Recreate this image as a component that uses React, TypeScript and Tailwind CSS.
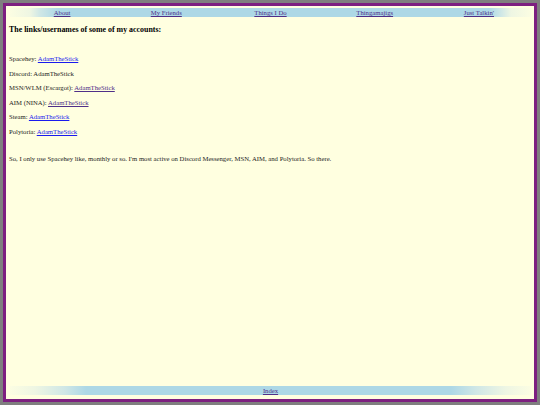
export default function App() {
  const navItems = ['About', 'My Friends', 'Things I Do', 'Thingamajigs', "Just Talkin'"];
  const accounts: { label: string; user: string; link?: 'new' | 'visited' }[] = [
    { label: 'Spacehey:', user: 'AdamTheStick', link: 'new' },
    { label: 'Discord:', user: 'AdamTheStick' },
    { label: 'MSN/WLM (Escargot):', user: 'AdamTheStick', link: 'visited' },
    { label: 'AIM (NINA):', user: 'AdamTheStick', link: 'visited' },
    { label: 'Steam:', user: 'AdamTheStick', link: 'new' },
    { label: 'Polytoria:', user: 'AdamTheStick', link: 'new' },
  ];

  return (
    <div className="h-[405px] w-[540px] bg-[#7f7f7f] p-[3px] font-['Liberation_Serif',serif] text-[#1c1c1c]">
      <div className="flex h-full flex-col border-[3px] border-[#7d1f80] bg-[#ffffe0] px-[3px] pb-[4px] pt-[2px]">
        {/* top nav */}
        <div className="ml-[1px] grid h-[9px] grid-cols-5 bg-[linear-gradient(to_right,#fbfde2,#eef6e3_20px,#cfe7e6_30px,#add8e6_48px,#add8e6_calc(100%-42px),#cfe7e6_calc(100%-30px),#eef6e3_calc(100%-20px),#fbfde2)]">
          {navItems.map((n) => (
            <div key={n} className="flex items-center justify-center">
              <a className="text-[6.7px] leading-[9px] text-[#4f2f88] underline">{n}</a>
            </div>
          ))}
        </div>

        {/* content */}
        <div className="flex-1 pt-[8px] text-[6.7px] leading-[8px]">
          <h3 className="mb-[20px] text-[7.9px] font-bold leading-[10px] text-black">The links/usernames of some of my accounts:</h3>
          <div className="flex flex-col gap-[6.5px]">
            {accounts.map((a) => (
              <p key={a.label}>
                {a.label}{' '}
                {a.link ? (
                  <a className={`underline ${a.link === 'visited' ? 'text-[#4f2f88]' : 'text-[#1a1aee]'}`}>{a.user}</a>
                ) : (
                  a.user
                )}
              </p>
            ))}
          </div>
          <p className="mt-[19px]">
            So, I only use Spacehey like, monthly or so. I'm most active on Discord Messenger, MSN, AIM, and Polytoria. So there.
          </p>
        </div>

        {/* bottom nav */}
        <div className="ml-[1px] flex h-[9px] items-center justify-center bg-[linear-gradient(to_right,#fbfde2,#eef6e3_25px,#cfe7e6_55px,#add8e6_76px,#add8e6_calc(100%-80px),#cfe7e6_calc(100%-55px),#eef6e3_calc(100%-25px),#fbfde2)]">
          <a className="text-[6.7px] leading-[9px] text-[#4f2f88] underline">Index</a>
        </div>
      </div>
    </div>
  );
}
